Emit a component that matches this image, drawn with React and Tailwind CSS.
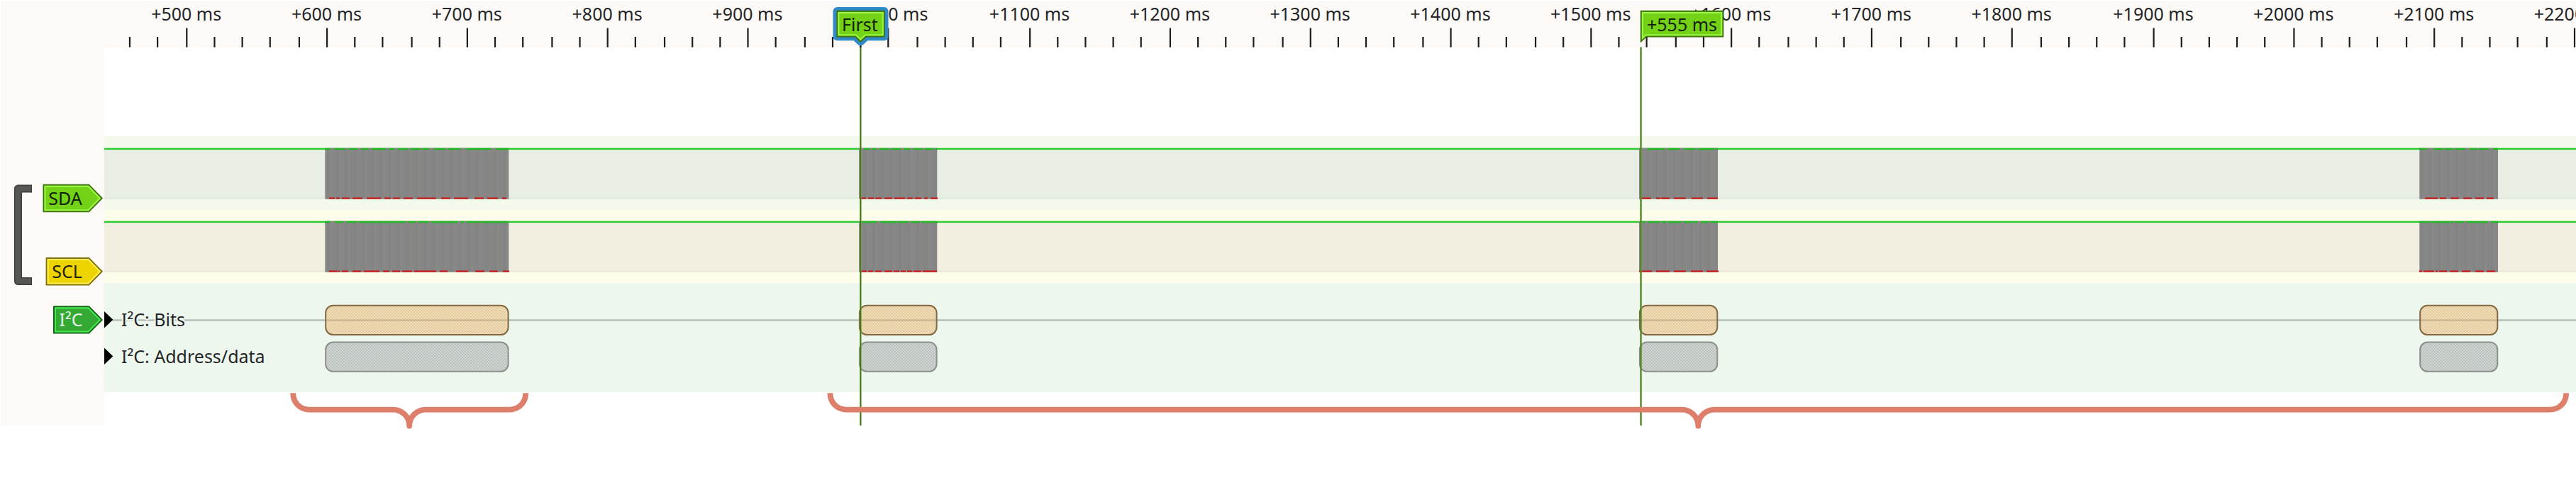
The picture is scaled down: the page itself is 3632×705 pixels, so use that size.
import React from "react";

const FONT = "font-['Noto_Sans','Open_Sans',sans-serif]";
const WIDTH = 3632;
const GUTTER = 147;

// The ruler is quantised to whole device units.
const UNIT = 2.0604;
const tickX = (k) => 263.3 + UNIT * Math.floor(19.226 * k + 0.222);
const ticks = Array.from({ length: 88 }, (_, i) => i - 2).map((k) => ({
  k,
  x: tickX(k),
  major: k % 5 === 0,
}));

const bursts = [
  { start: 458.3, end: 717.3 },
  { start: 1211, end: 1321.3 },
  { start: 2311, end: 2422 },
  { start: 3411.3, end: 3522 },
];

// High / low segments seen inside each burst, as [start, end] pairs.
const sda = {
  high: [
    [458, 466], [471, 487], [491, 504], [509, 520], [524, 544], [548, 556], [561, 575], [579, 593], [595, 605], [612, 629], [632, 649], [657, 693], [699, 717],
    [1218, 1227], [1230, 1236], [1240, 1254], [1257, 1270], [1274, 1283], [1287, 1301], [1304, 1316], [1319, 1322],
    [2323, 2347], [2351, 2368], [2374, 2391], [2394, 2417], [2419, 2422],
    [3411, 3422], [3431, 3445], [3447, 3458], [3461, 3476], [3481, 3493], [3495, 3509], [3514, 3522],
  ],
  low: [
    [464, 472], [474, 479], [482, 493], [497, 511], [517, 537], [542, 551], [554, 564], [569, 582], [588, 615], [622, 635], [640, 660], [669, 682], [687, 702], [708, 714],
    [1214, 1221], [1224, 1232], [1234, 1243], [1247, 1258], [1261, 1276], [1279, 1287], [1290, 1299], [1303, 1308], [1312, 1322],
    [2314, 2328], [2335, 2341], [2342, 2354], [2360, 2377], [2385, 2401], [2407, 2422],
    [3419, 3437], [3440, 3449], [3455, 3467], [3473, 3485], [3490, 3502], [3506, 3516],
  ],
};
const scl = {
  high: [
    [458, 466], [472, 484], [488, 504], [506, 572], [575, 587], [590, 605], [608, 646], [649, 654], [657, 677], [678, 717],
    [1213, 1237], [1241, 1264], [1265, 1281], [1284, 1297], [1299, 1322],
    [2314, 2320], [2323, 2341], [2343, 2350], [2352, 2371], [2374, 2388], [2389, 2394], [2398, 2409], [2411, 2422],
    [3411, 3425], [3426, 3459], [3461, 3474], [3477, 3508], [3512, 3522],
  ],
  low: [
    [464, 475], [476, 479], [482, 491], [497, 509], [513, 535], [540, 549], [553, 564], [567, 581], [584, 615], [620, 631], [643, 660], [670, 683], [690, 702], [709, 718],
    [1214, 1222], [1224, 1231], [1234, 1243], [1247, 1258], [1260, 1268], [1270, 1277], [1279, 1286], [1288, 1299], [1301, 1321],
    [2311, 2329], [2335, 2354], [2360, 2377], [2384, 2401], [2406, 2423],
    [3411, 3415], [3417, 3432], [3434, 3437], [3439, 3450], [3454, 3466], [3471, 3483], [3490, 3502], [3506, 3518],
  ],
};

function Ruler() {
  return (
    <header className="h-[67px] pt-px pl-px">
      <svg width={WIDTH - 1} height="66" viewBox="1 1 3631 66" className="block bg-[#fdf9f6]">
        {ticks.map((t) => (
          <rect key={t.k} x={t.x - 1.1} y={t.major ? 39.6 : 52} width="2.2" height={t.major ? 27 : 14.6} fill="#1c1c1c" />
        ))}
        {ticks
          .filter((t) => t.major)
          .map((t) => (
            <text key={t.k} x={t.x - 0.6} y="29.3" textAnchor="middle" fontSize="25" fill="#232629" className={FONT}>
              {`+${500 + t.k * 20} ms`}
            </text>
          ))}
      </svg>
    </header>
  );
}

function Flag({ label, x, y, textX, fill, edge, light, color }) {
  const shape = (d) =>
    `M${x + d} ${y + d} H${125.3 - d * 0.4} L${143.7 - d * 1.4} ${y + 18.7} L${125.3 - d * 0.4} ${y + 37.4 - d} H${x + d} Z`;
  return (
    <g>
      <path d={shape(0)} fill={fill} stroke={edge} strokeWidth="2" />
      <path d={shape(2)} fill="none" stroke={light} strokeWidth="2" />
      <text x={textX} y={y + 28.2} fontSize="25" fill={color} className={FONT}>
        {label}
      </text>
    </g>
  );
}

function Gutter() {
  return (
    <aside className="w-[147px] shrink-0 pl-px">
      <svg width="146" height="533" viewBox="1 67 146 533" className="block bg-[#fdf9f6]">
        <path d="M45 266 H25.5 V396.5 H45" fill="none" stroke="#3c3e3a" strokeWidth="11" strokeLinejoin="round" />
        <path d="M44 266 H25.5 V396.5 H44" fill="none" stroke="#555753" strokeWidth="8" strokeLinejoin="round" />
        <Flag label="SDA" x={61.5} y={260.8} textX={68.3} fill="#73d216" edge="#3f720d" light="#9bf847" color="#10200a" />
        <Flag label="SCL" x={65.6} y={364} textX={73.3} fill="#edd400" edge="#7c6f08" light="#ffee55" color="#221f05" />
        <Flag label="I²C" x={76} y={432.2} textX={83.6} fill="#33a933" edge="#14611a" light="#43e84a" color="#e6f6ea" />
      </svg>
    </aside>
  );
}

function LogicTrace({ top, height, wave, band, area, base, lines }) {
  const hi = wave;
  const lo = wave + 69.6;
  return (
    <svg width={WIDTH - GUTTER} height={height} viewBox={`${GUTTER} ${top} ${WIDTH - GUTTER} ${height}`} className="block">
      <defs>
        <pattern id={`edges-${top}`} width="12.4" height="10" patternUnits="userSpaceOnUse">
          <rect width="12.4" height="10" fill="#868686" />
          <rect x="3" width="2" height="10" fill="#828282" />
          <rect x="7" width="3" height="10" fill="#888884" />
        </pattern>
      </defs>
      <rect x={GUTTER} y={top} width={WIDTH} height={height} fill={band} />
      <rect x={GUTTER} y={hi} width={WIDTH} height={71} fill={area} />
      <rect x={GUTTER} y={lo - 1} width={WIDTH} height="2" fill={base} />
      <rect x={GUTTER} y={hi - 1.2} width={WIDTH} height="2.4" fill="#2bcb2b" />
      {bursts.map((b) => (
        <rect key={b.start} x={b.start} y={hi - 1.2} width={b.end - b.start} height="72.1" fill={`url(#edges-${top})`} />
      ))}
      {lines.high.map(([a, b]) => (
        <rect key={a} x={a} y={hi - 0.9} width={b - a} height="2.2" fill="#20b820" />
      ))}
      {lines.low.map(([a, b]) => (
        <rect key={a} x={a} y={lo - 1.1} width={b - a} height="2.3" fill="#c81e1e" />
      ))}
    </svg>
  );
}

function DecoderTrace() {
  return (
    <svg width={WIDTH - GUTTER} height="154" viewBox="147 398.5 3485 154" className="block bg-[#edf7ee]">
      <defs>
        <pattern id="bits" width="4.12" height="4.12" patternUnits="userSpaceOnUse">
          <rect width="4.12" height="4.12" fill="#ece4cb" />
          <rect width="2.06" height="2.06" fill="#e9c48c" />
          <rect x="2.06" y="2.06" width="2.06" height="2.06" fill="#e9c48c" />
        </pattern>
        <pattern id="address" width="4.12" height="4.12" patternUnits="userSpaceOnUse">
          <rect width="4.12" height="4.12" fill="#d6dcd8" />
          <rect width="2.06" height="2.06" fill="#b6bab8" />
          <rect x="2.06" y="2.06" width="2.06" height="2.06" fill="#b6bab8" />
        </pattern>
      </defs>
      <rect x={GUTTER} y="449.7" width={WIDTH} height="2.4" fill="#b4bcb6" />
      <path d="M147 438.5 L159.3 450.3 L147 462 Z" fill="#000" />
      <path d="M147 490 L159.3 501.7 L147 513.5 Z" fill="#000" />
      {bursts.map((b) => {
        const w = b.end - b.start - 1.6;
        return (
          <g key={b.start}>
            <rect x={b.start + 0.9} y="430.2" width={w} height="41.4" rx="10.5" fill="url(#bits)" stroke="#816a43" strokeWidth="2" />
            <rect x={b.start + 2} y="449.8" width={w - 2} height="2.4" fill="#a89a78" opacity="0.5" />
            <rect x={b.start + 0.9} y="481.9" width={w} height="41.4" rx="10.5" fill="url(#address)" stroke="#8c8f8d" strokeWidth="2" />
          </g>
        );
      })}
      <g fontSize="25" fill="#232629" stroke="#edf7ee" strokeWidth="4" strokeLinejoin="round" paintOrder="stroke" className={FONT}>
        <text x="171" y="459.8">I²C: Bits</text>
        <text x="171" y="511.4">I²C: Address/data</text>
      </g>
    </svg>
  );
}

const brace = (l, m, r) =>
  `M${l} 554.3 C${l} 568 ${l + 10} 577.6 ${l + 23} 577.6 H${m - 23} C${m - 10} 577.6 ${m} 588 ${m} 600.5 C${m} 588 ${m + 10} 577.6 ${m + 23} 577.6 H${r - 23} C${r - 10} 577.6 ${r} 568 ${r} 554.3`;

function Overlay() {
  return (
    <svg width={WIDTH} height="705" viewBox="0 0 3632 705" className="pointer-events-none absolute top-0 left-0">
      {[1213.4, 2313.6].map((x) => (
        <g key={x}>
          <rect x={x - 1.5} y="66.5" width="3" height="533.5" fill="#73a04a" opacity="0.75" />
          <rect x={x - 0.6} y="66.5" width="1.2" height="533.5" fill="#3f720d" />
        </g>
      ))}
      <rect x="1212.4" y="62" width="2" height="5" fill="#1c1c1c" />
      <path
        d="M1180.3 15.8 H1246.7 V51.4 H1221 L1213.4 58.6 L1205.8 51.4 H1180.3 Z"
        fill="none"
        stroke="#3089c8"
        strokeWidth="11.6"
        strokeLinejoin="round"
      />
      <path d="M1180.3 15.8 H1246.7 V51.4 H1221 L1213.4 58.6 L1205.8 51.4 H1180.3 Z" fill="#73d216" stroke="#3f720d" strokeWidth="2" />
      <path d="M1182.4 17.9 H1244.7 V49.3 H1220 L1213.4 55.6 L1206.8 49.3 H1182.4 Z" fill="none" stroke="#9bf847" strokeWidth="2" />
      <text x="1187" y="43.7" fontSize="25" fill="#10200a" className={FONT}>First</text>
      <path d="M2313.8 15.8 H2429.3 V51.4 H2321 L2313.8 58.2 Z" fill="#73d216" stroke="#3f720d" strokeWidth="2" />
      <path d="M2315.9 17.9 H2427.2 V49.3 H2320.4 L2315.9 53.6 Z" fill="none" stroke="#9bf847" strokeWidth="2" />
      <text x="2322" y="43.7" fontSize="25" fill="#10200a" className={FONT}>+555 ms</text>
      <g fill="none" stroke="#dd7f6b" strokeWidth="7.8" strokeLinejoin="round">
        <path d={brace(413.2, 577.2, 741.2)} />
        <path d={brace(1170.4, 2394.3, 3618.2)} />
      </g>
    </svg>
  );
}

export default function App() {
  return (
    <div className="relative flex h-[705px] w-[3632px] flex-col overflow-hidden bg-white">
      <Ruler />
      <div className="flex h-[533px]">
        <Gutter />
        <main className="flex grow flex-col pt-[125px]">
          <LogicTrace top={192} height={104} wave={209.9} band="#f3faec" area="#e8eee4" base="#e1e8dc" lines={sda} />
          <LogicTrace top={296} height={102.5} wave={312.9} band="#fefdeb" area="#f2efe1" base="#ece9da" lines={scl} />
          <DecoderTrace />
        </main>
      </div>
      <Overlay />
    </div>
  );
}
